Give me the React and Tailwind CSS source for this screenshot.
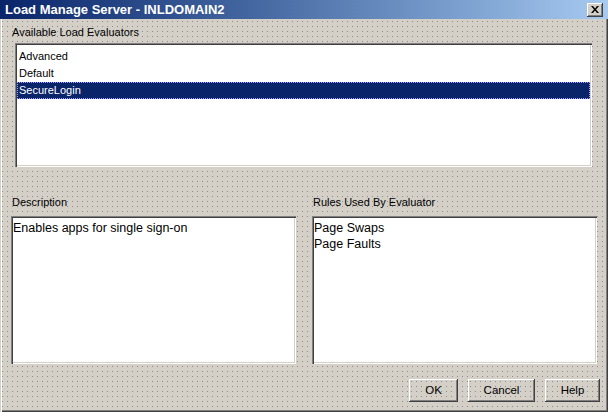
import React from "react";

const sunken =
  "shadow-[inset_1px_1px_0_#808080,inset_2px_2px_0_#404040,inset_-1px_-1px_0_#ffffff,inset_-2px_-2px_0_#d4d0c8]";
const raised =
  "shadow-[inset_-1px_-1px_0_#404040,inset_1px_1px_0_#ffffff,inset_-2px_-2px_0_#808080,inset_2px_2px_0_#d4d0c8]";
const dots =
  "bg-[#d4d0c8] bg-[radial-gradient(circle,#8c8c8c_0.55px,transparent_0.75px)] bg-[length:5px_5px]";

function Btn({ label, w }) {
  return (
    <div
      className={`${raised} ${dots} h-[23px] flex items-center justify-center text-[11.5px] text-black`}
      style={{ width: w }}
    >
      {label}
    </div>
  );
}

export default function App() {
  return (
    <div
      className="w-[608px] h-[412px] flex flex-col bg-[#d4d0c8] overflow-hidden"
      style={{ fontFamily: '"Liberation Sans", Arial, sans-serif' }}
    >
      {/* Title bar */}
      <div className="h-[19px] flex items-center bg-gradient-to-r from-[#0a246a] to-[#a6caf0] pl-[5px] pr-[5px]">
        <div className="text-white font-bold text-[13px] leading-none flex-1">
          Load Manage Server - INLDOMAIN2
        </div>
        <div className={`w-[16px] h-[14px] bg-[#d4d0c8] ${raised} flex items-center justify-center`}>
          <svg width="8" height="7" viewBox="0 0 8 7">
            <path d="M0 0h2l2 2.5L6 0h2L5 3.5 8 7H6L4 4.5 2 7H0l3-3.5z" fill="#000" />
          </svg>
        </div>
      </div>

      {/* Body */}
      <div
        className={`flex-1 flex flex-col ${dots} shadow-[inset_1px_0_0_#d4d0c8,inset_2px_0_0_#ffffff,inset_-1px_-1px_0_#404040,inset_-2px_-2px_0_#808080]`}
      >
        <div className="pt-[7px] pl-[12px] text-[11px] leading-[13px] text-black">
          Available Load Evaluators
        </div>
        <div className={`ml-[15px] mt-[4px] w-[577px] h-[124px] bg-white ${sunken} p-[2px] pt-[5px] text-[11px] text-black`}>
          <div className="h-[17px] flex items-center pl-[2px]">Advanced</div>
          <div className="h-[17px] flex items-center pl-[2px]">Default</div>
          <div className="h-[17px] flex items-center pl-[2px] bg-[#0a246a] text-white outline outline-1 outline-dotted outline-[#a0a0ff] -outline-offset-1">
            SecureLogin
          </div>
        </div>

        <div className="flex mt-[29px]">
          <div className="flex flex-col ml-[11px] w-[285px]">
            <div className="pl-[1px] text-[11px] leading-[13px] text-black">Description</div>
            <div className={`mt-[7px] h-[148px] bg-white ${sunken} pt-[4px] pl-[2px] text-[12.5px] leading-[16px] text-black`}>
              Enables apps for single sign-on
            </div>
          </div>
          <div className="flex flex-col ml-[16px] w-[285px]">
            <div className="pl-[1px] text-[11px] leading-[13px] text-black">Rules Used By Evaluator</div>
            <div className={`mt-[7px] h-[148px] bg-white ${sunken} pt-[4px] pl-[2px] text-[12.5px] leading-[16px] text-black`}>
              <div>Page Swaps</div>
              <div>Page Faults</div>
            </div>
          </div>
        </div>

        <div className="flex mt-[15px] ml-[409px] gap-[10px]">
          <Btn label="OK" w={49} />
          <Btn label="Cancel" w={67} />
          <Btn label="Help" w={55} />
        </div>
      </div>
    </div>
  );
}
